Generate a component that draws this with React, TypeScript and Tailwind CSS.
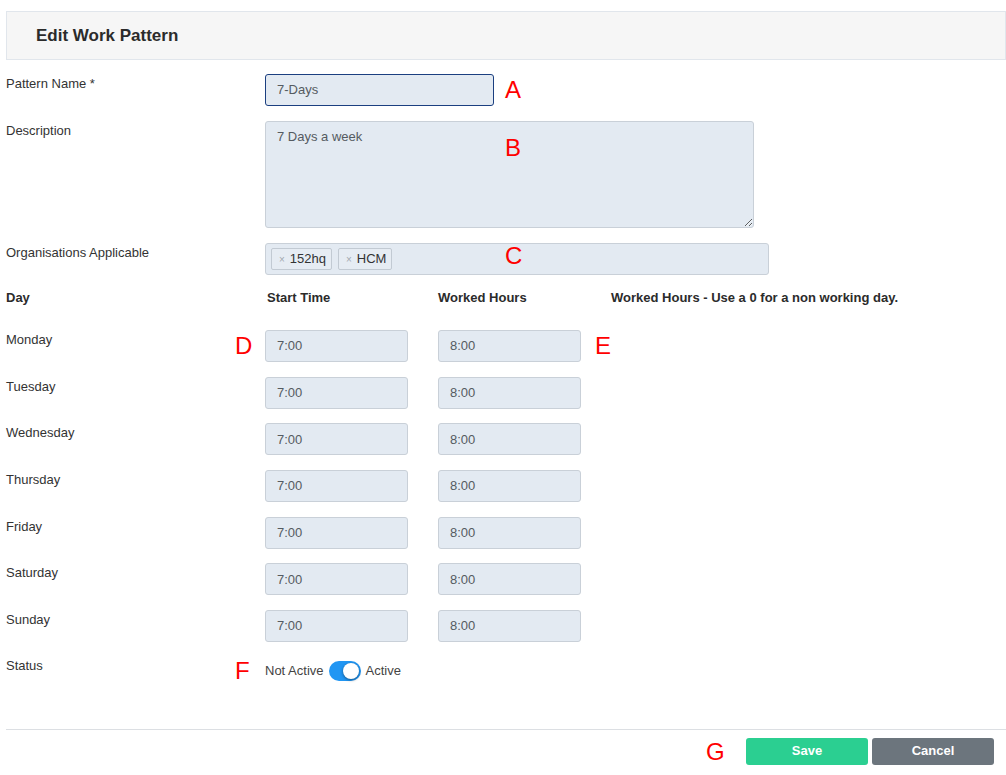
import React from "react";

const days = ["Monday", "Tuesday", "Wednesday", "Thursday", "Friday", "Saturday", "Sunday"];

function Mark({ children, className }: { children: React.ReactNode; className: string }) {
  return (
    <span className={"absolute text-[24px] leading-[24px] font-normal text-[#ff0000] " + className}>
      {children}
    </span>
  );
}

function Field({ value, w }: { value: string; w: string }) {
  return (
    <div
      className={
        "h-[32px] rounded-[3px] border border-[#c9d0d8] bg-[#e3eaf2] px-[11px] flex items-center text-[13px] text-[#555b61] " +
        w
      }
    >
      {value}
    </div>
  );
}

export default function App() {
  return (
    <div className="relative w-[1006px] min-h-[775px] bg-white pl-[6px] font-['Liberation_Sans',Arial,sans-serif] text-[#333]">
      {/* header */}
      <div className="mt-[11px] h-[49px] border border-[#e1e6ec] bg-[#f6f6f6] pl-[29px] flex items-center">
        <h1 className="text-[17px] font-bold text-[#2b2b2b]">Edit Work Pattern</h1>
      </div>

      {/* Pattern Name */}
      <div className="relative mt-[14px] flex">
        <div className="w-[259px] pt-px text-[13px] leading-[18px]">Pattern Name *</div>
        <div className="h-[32px] w-[229px] rounded-[3px] border border-[#1b3f80] bg-[#e3eaf2] px-[11px] flex items-center text-[13px] text-[#555b61]">
          7-Days
        </div>
        <Mark className="left-[499px] top-[4px]">A</Mark>
      </div>

      {/* Description */}
      <div className="relative mt-[15px] flex">
        <div className="w-[259px] pt-px text-[13px] leading-[18px]">Description</div>
        <textarea
          readOnly
          defaultValue="7 Days a week"
          className="h-[107px] w-[489px] rounded-[3px] border border-[#c9d0d8] bg-[#e3eaf2] px-[11px] pt-[6px] text-[13px] leading-[18px] text-[#555b61] outline-none"
        />
        <Mark className="left-[499px] top-[15px]">B</Mark>
      </div>

      {/* Organisations */}
      <div className="relative mt-[15px] flex">
        <div className="w-[259px] pt-px text-[13px] leading-[18px]">Organisations Applicable</div>
        <div className="h-[32px] w-[504px] rounded-[3px] border border-[#c9d0d8] bg-[#e3eaf2] pl-[5px] flex items-center gap-[6px]">
          {["152hq", "HCM"].map((t) => (
            <span
              key={t}
              className="h-[22px] flex items-center gap-[5px] rounded-[2px] border border-[#c2cad3] bg-[#e6ecf3] pl-[7px] pr-[5px] text-[13px] text-[#333]"
            >
              <span className="text-[10px] text-[#a3a9b0]">×</span>
              {t}
            </span>
          ))}
        </div>
        <Mark className="left-[499px] top-[1px]">C</Mark>
      </div>

      {/* column headers */}
      <div className="mt-[14px] flex text-[13px] leading-[18px] font-bold text-[#2b2b2b]">
        <div className="w-[261px]">Day</div>
        <div className="w-[171px]">Start Time</div>
        <div className="w-[173px]">Worked Hours</div>
        <div>Worked Hours - Use a 0 for a non working day.</div>
      </div>

      {/* day rows */}
      <div className="mt-[23px] flex flex-col gap-[14.67px]">
        {days.map((d, i) => (
          <div key={d} className="relative flex">
            <div className="w-[259px] pt-px text-[13px] leading-[18px]">{d}</div>
            <Field value="7:00" w="w-[143px]" />
            <div className="w-[30px]" />
            <Field value="8:00" w="w-[143px]" />
            {i === 0 && (
              <>
                <Mark className="left-[229px] top-[4px]">D</Mark>
                <Mark className="left-[589px] top-[4px]">E</Mark>
              </>
            )}
          </div>
        ))}
        <div className="relative flex">
          <div className="w-[259px] text-[13px] leading-[18px]">Status</div>
          <div className="h-[29px] flex items-center text-[13px] text-[#444]">
            <span>Not Active</span>
            <span className="ml-[5px] relative h-[20px] w-[32px] rounded-full bg-[#2196f3]">
              <span className="absolute right-[2px] top-[2px] h-[16px] w-[16px] rounded-full bg-white shadow-[0_1px_3px_rgba(0,0,0,0.45)]" />
            </span>
            <span className="ml-[5px]">Active</span>
          </div>
          <Mark className="left-[229px] top-[2px]">F</Mark>
        </div>
      </div>

      {/* footer */}
      <div className="mt-[43px] h-px bg-[#dcdfe3]" />
      <div className="relative mt-[8px] flex justify-end gap-[4px] pr-[12px]">
        <Mark className="left-[700px] top-[2px]">G</Mark>
        <button className="h-[27px] w-[122px] rounded-[3px] bg-[#2bcf91] text-[13px] font-bold text-white">
          Save
        </button>
        <button className="h-[27px] w-[122px] rounded-[3px] bg-[#6c757d] text-[13px] font-bold text-white">
          Cancel
        </button>
      </div>
    </div>
  );
}
